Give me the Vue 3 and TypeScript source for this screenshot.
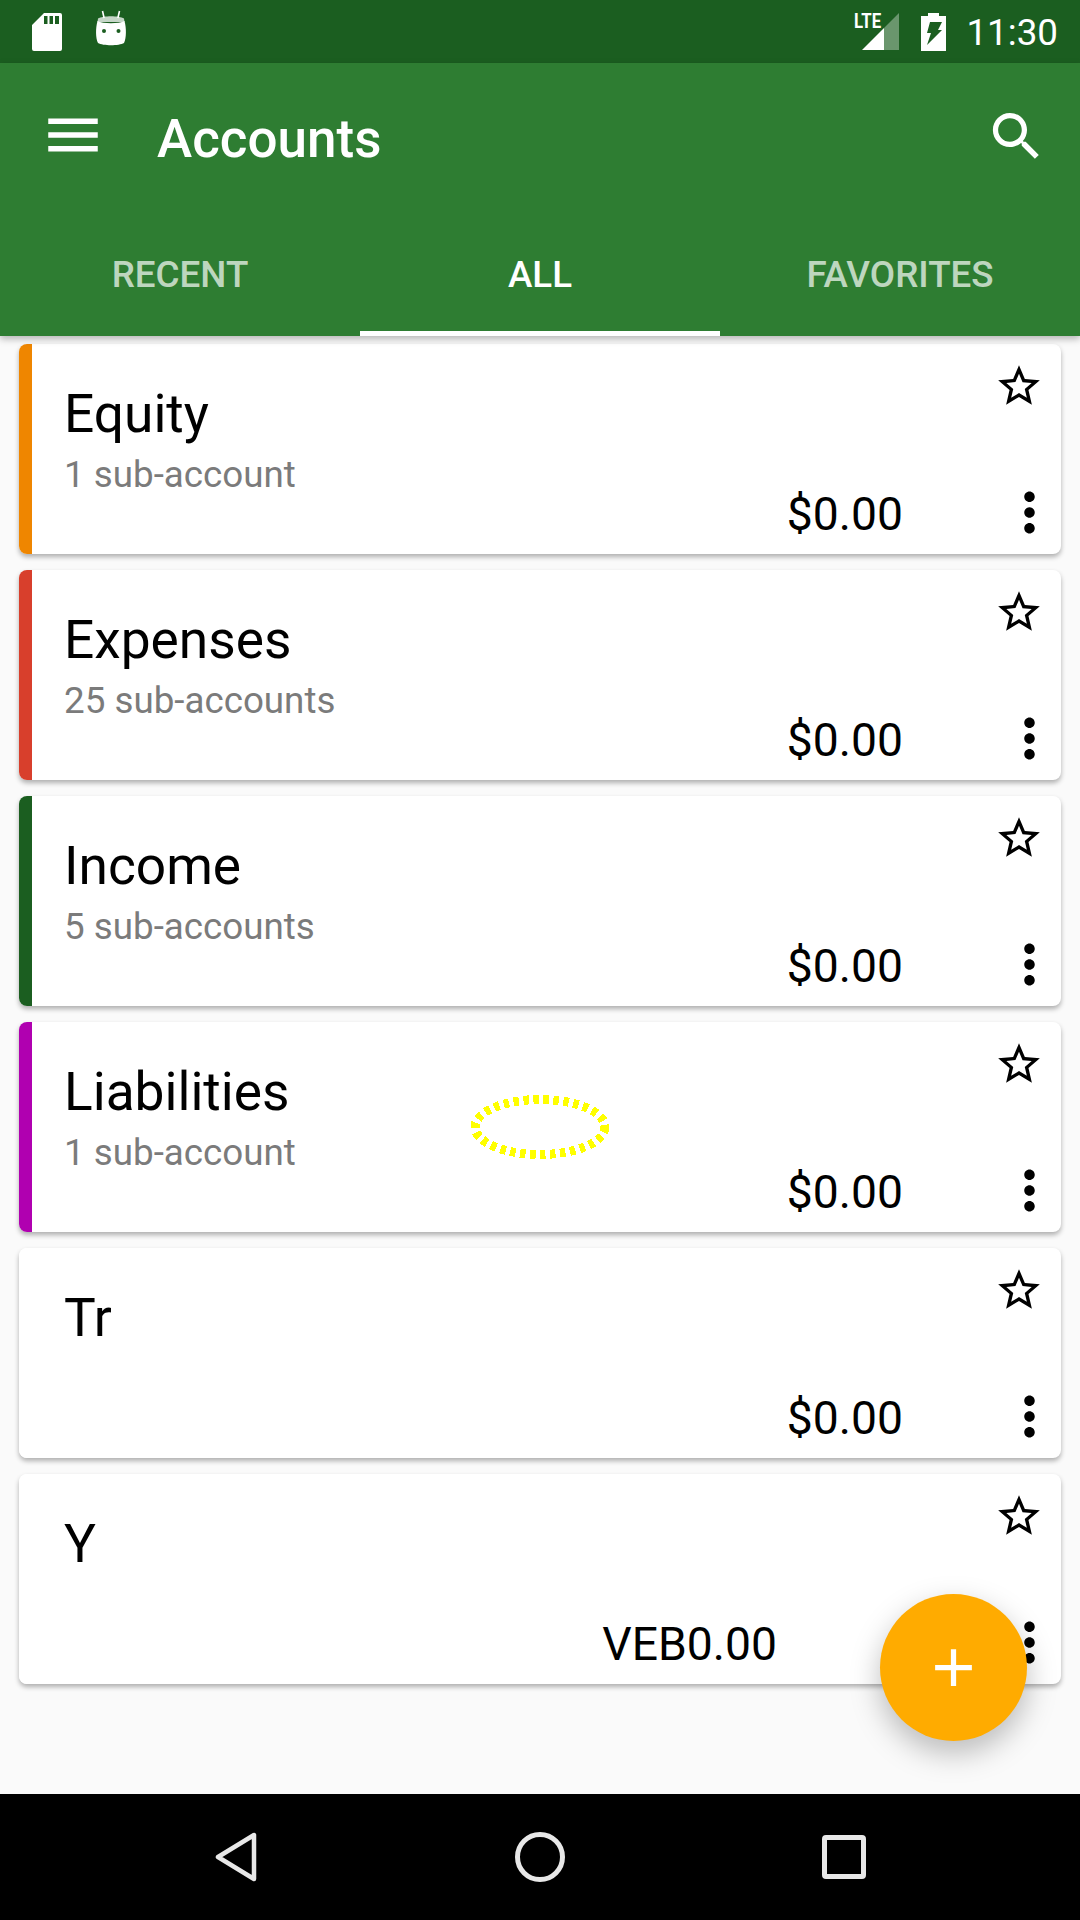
<script setup lang="ts">
interface Account {
  id: number;
  name: string;
  sub: string;
  amount: string;
  color: string;
  shifted?: boolean;
}

const accounts: Account[] = [
  { id: 1, name: 'Equity', sub: '1 sub-account', amount: '$0.00', color: '#EF8600' },
  { id: 2, name: 'Expenses', sub: '25 sub-accounts', amount: '$0.00', color: '#D83F2C' },
  { id: 3, name: 'Income', sub: '5 sub-accounts', amount: '$0.00', color: '#1B5E20' },
  { id: 4, name: 'Liabilities', sub: '1 sub-account', amount: '$0.00', color: '#B000B0' },
  { id: 5, name: 'Tr', sub: '', amount: '$0.00', color: '#FFFFFF' },
  { id: 6, name: 'Y', sub: '', amount: 'VEB0.00', color: '#FFFFFF', shifted: true },
];

const tabs = ['RECENT', 'ALL', 'FAVORITES'];
const activeTab = 'ALL';
</script>

<template>
  <div class="screen">
    <div class="status-bar">
      <div class="status-left">
        <svg class="sd-icon" width="30" height="38" viewBox="0 0 30 38">
          <path fill="#fff" fill-rule="evenodd" d="M12 0h16a2 2 0 0 1 2 2v34a2 2 0 0 1-2 2H2a2 2 0 0 1-2-2V12zM12 3v8h3.500V3zM17.500 3v8H21V3zM23 3v8h4V3z" />
        </svg>
        <svg class="bot-icon" width="32" height="38" viewBox="0 0 32 38">
          <path stroke="#fff" stroke-width="1.6" d="M7.500 1l1.600 7M24.500 1l-1.600 7" />
          <path fill="#fff" opacity="0.75" d="M3 8.500C8 5.500 24 5.500 29 8.500L29.500 12H2.500z" />
          <path fill="#fff" d="M2.500 11C8 14 24 14 29.500 11 31.500 18 31.500 28 29 33 24 36 8 36 3 33 .5 28 .5 18 2.500 11z" />
          <circle cx="9" cy="21" r="2" fill="#1B5E20" />
          <circle cx="23.500" cy="21" r="2" fill="#1B5E20" />
        </svg>
      </div>
      <div class="status-right">
        <div class="signal">
          <span class="lte">LTE</span>
          <svg width="37" height="37" viewBox="0 0 37 37">
            <path fill="#fff" opacity="0.35" d="M37 0v37H22V15z" />
            <path fill="#fff" d="M22 15v22H0z" />
          </svg>
        </div>
        <svg class="battery" width="25" height="38" viewBox="0 0 25 38">
          <path fill="#fff" fill-rule="evenodd" d="M7 0h11v3h7v35H0V3h7zM9 9h12l-4 8h4L6 32l4-12H6z" />
        </svg>
        <span class="clock">11:30</span>
      </div>
    </div>

    <header class="app-bar">
      <div class="toolbar">
        <svg class="menu-icon" width="66" height="66" viewBox="0 0 24 24">
          <path fill="#fff" d="M3 18h18v-2H3v2zm0-5h18v-2H3v2zm0-7v2h18V6H3z" />
        </svg>
        <span class="title">Accounts</span>
        <svg class="search-icon" width="63" height="63" viewBox="0 0 24 24">
          <path fill="#fff" d="M15.500 14h-.79l-.28-.27C15.410 12.590 16 11.110 16 9.500 16 5.910 13.090 3 9.500 3S3 5.910 3 9.500 5.910 16 9.500 16c1.610 0 3.090-.59 4.230-1.570l.27.28v.79l5 4.990L20.490 19l-4.990-5zm-6 0C7.010 14 5 11.990 5 9.500S7.010 5 9.500 5 14 7.010 14 9.500 11.990 14 9.500 14z" />
        </svg>
      </div>
      <nav class="tabs">
        <div v-for="tab in tabs" :key="tab" class="tab" :class="{ active: tab === activeTab }">{{ tab }}</div>
      </nav>
    </header>

    <main class="list">
      <div v-for="item in accounts" :key="item.id" class="card">
        <div class="stripe" :style="{ backgroundColor: item.color }"></div>
        <div class="card-body">
          <div class="card-top">
            <div class="card-text">
              <div class="name">{{ item.name }}</div>
              <div class="sub">{{ item.sub }}</div>
            </div>
            <svg class="star" width="50" height="50" viewBox="0 0 24 24">
              <path d="M22 9.240l-7.190-.62L12 2 9.190 8.630 2 9.240l5.460 4.730L5.820 21 12 17.270 18.180 21l-1.630-7.030L22 9.240zM12 15.400l-3.760 2.270 1-4.280-3.320-2.880 4.380-.38L12 6.100l1.710 4.040 4.380.38-3.320 2.880 1 4.280L12 15.400z" />
            </svg>
          </div>
          <div class="card-bottom">
            <span class="amount" :class="{ shifted: item.shifted }">{{ item.amount }}</span>
            <svg class="more" width="63" height="63" viewBox="0 0 24 24">
              <path d="M12 8c1.100 0 2-.9 2-2s-.9-2-2-2-2 .9-2 2 .9 2 2 2zm0 2c-1.100 0-2 .9-2 2s.9 2 2 2 2-.9 2-2-.9-2-2-2zm0 6c-1.100 0-2 .9-2 2s.9 2 2 2 2-.9 2-2-.9-2-2-2z" />
            </svg>
          </div>
        </div>
      </div>
    </main>

    <footer class="nav-bar">
      <div class="nav-btn">
        <svg width="44" height="50" viewBox="0 0 44 50">
          <path fill="none" stroke="#E8E8E8" stroke-width="4.500" stroke-linejoin="round" d="M40 3v44L4 25z" />
        </svg>
      </div>
      <div class="nav-btn">
        <svg width="50" height="50" viewBox="0 0 50 50">
          <circle cx="25" cy="25" r="22.500" fill="none" stroke="#E8E8E8" stroke-width="5" />
        </svg>
      </div>
      <div class="nav-btn">
        <svg width="44" height="44" viewBox="0 0 44 44">
          <rect x="2.500" y="2.500" width="39" height="39" rx="1.500" fill="none" stroke="#E8E8E8" stroke-width="5" />
        </svg>
      </div>
    </footer>

    <!-- touch marker from the recording -->
    <svg class="touch-mark" width="140" height="64" viewBox="0 0 140 64">
      <ellipse cx="70" cy="32" rx="65" ry="27.500" fill="none" stroke="#FFFF00" stroke-width="9" stroke-dasharray="5.500 4.500" shape-rendering="crispEdges" />
    </svg>

    <div class="fab">
      <svg width="63" height="63" viewBox="0 0 24 24">
        <path fill="#fff" d="M19 13h-6v6h-2v-6H5v-2h6V5h2v6h6v2z" />
      </svg>
    </div>
  </div>
</template>

<style scoped>
.screen {
  position: relative;
  width: 1080px;
  height: 1920px;
  display: flex;
  flex-direction: column;
  overflow: hidden;
  background-color: #FAFAFA;
  font-family: Roboto, "Liberation Sans", sans-serif;
}

.status-bar {
  height: 63px;
  flex-shrink: 0;
  display: flex;
  justify-content: space-between;
  align-items: center;
  padding: 0 22px 0 32px;
  background-color: #1B5E20;
  color: #fff;
}

.status-left {
  display: flex;
  align-items: center;
  gap: 33px;
}

.bot-icon {
  margin-top: -6px;
}

.status-right {
  display: flex;
  align-items: center;
}

.signal {
  position: relative;
  width: 46px;
  display: flex;
  justify-content: flex-end;
  margin-right: 22px;
}

.lte {
  position: absolute;
  left: 1px;
  top: -4px;
  font-size: 21px;
  font-weight: 700;
  line-height: 24px;
  transform: scaleX(0.8);
  transform-origin: left center;
}

.clock {
  margin-left: 20px;
  padding-top: 2px;
  font-size: 36.75px;
}

.app-bar {
  position: relative;
  z-index: 2;
  flex-shrink: 0;
  background-color: #2E7D32;
  box-shadow: 0 3px 7px rgba(0, 0, 0, 0.28);
}

.toolbar {
  height: 147px;
  display: flex;
  align-items: center;
  padding: 0 32px 0 40px;
  color: #fff;
}

.menu-icon {
  margin-top: -4px;
}

.title {
  flex: 1;
  margin-left: 51px;
  margin-top: 5px;
  font-size: 53px;
  font-weight: 500;
}

.tabs {
  height: 126px;
  display: flex;
}

.tab {
  flex: 1;
  display: flex;
  align-items: center;
  justify-content: center;
  font-size: 36.75px;
  font-weight: 500;
  color: rgba(255, 255, 255, 0.7);
  border-bottom: 5px solid transparent;
  padding-top: 8px;
}

.tab.active {
  color: #fff;
  border-bottom-color: #fff;
}

.list {
  flex: 1;
  display: flex;
  flex-direction: column;
  gap: 16px;
  padding: 8px 19px 0;
}

.card {
  height: 210px;
  flex-shrink: 0;
  display: flex;
  overflow: hidden;
  border-radius: 8px;
  background-color: #fff;
  box-shadow: 0 3px 5px rgba(0, 0, 0, 0.3);
}

.stripe {
  width: 13px;
  flex-shrink: 0;
}

.card-body {
  flex: 1;
  min-width: 0;
  display: flex;
  flex-direction: column;
  padding: 0 0 10px 32px;
}

.card-top {
  height: 137px;
  display: flex;
  justify-content: space-between;
  align-items: flex-start;
}

.card-text {
  padding-top: 41px;
}

.name {
  font-size: 53.25px;
  line-height: 58px;
  color: #000;
}

.sub {
  font-size: 36.75px;
  line-height: 42px;
  margin-top: 11px;
  color: #7B7B7B;
}

.star {
  margin: 17px 17px 0 0;
}

.card-bottom {
  display: flex;
  justify-content: flex-end;
  align-items: center;
}

.amount {
  font-size: 46.25px;
  color: #000;
  margin-top: 2px;
  margin-right: 95px;
}

.amount.shifted {
  margin-right: 221px;
}

.nav-bar {
  height: 126px;
  flex-shrink: 0;
  display: flex;
  justify-content: center;
  background-color: #000;
}

.nav-btn {
  width: 304px;
  display: flex;
  align-items: center;
  justify-content: center;
}

.touch-mark {
  position: absolute;
  left: 470px;
  top: 1095px;
}

.fab {
  position: absolute;
  left: 880px;
  top: 1594px;
  width: 147px;
  height: 147px;
  display: flex;
  align-items: center;
  justify-content: center;
  border-radius: 50%;
  background-color: #FFAB00;
  box-shadow: 0 12px 30px rgba(0, 0, 0, 0.26);
}
</style>
